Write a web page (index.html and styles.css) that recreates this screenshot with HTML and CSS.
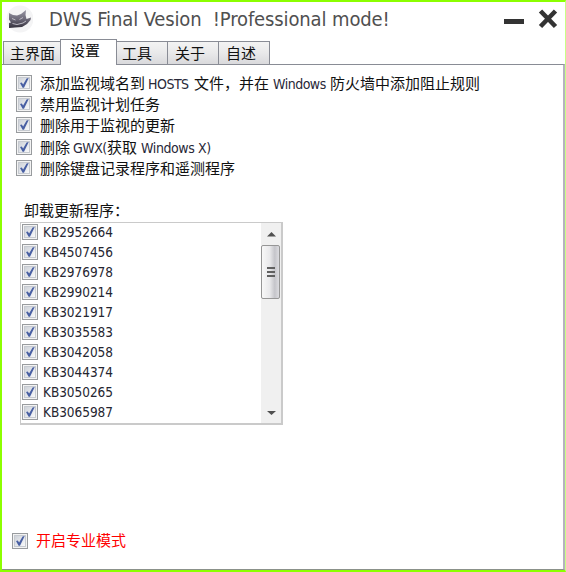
FILE: index.html
```html
<!DOCTYPE html>
<html lang="zh-CN">
<head>
<meta charset="utf-8">
<title>DWS Final Vesion</title>
<link rel="stylesheet" href="styles.css">
</head>
<body>
<svg width="0" height="0" class="defs" aria-hidden="true">
  <defs>
    <linearGradient id="box" x1="0" y1="0" x2="1" y2="1"><stop offset="0" stop-color="#ccd0d7"/><stop offset="1" stop-color="#fafbfc"/></linearGradient>
    <linearGradient id="cat" x1="0" y1="0" x2="0" y2="1"><stop offset="0" stop-color="#9795a3"/><stop offset=".5" stop-color="#6d6a79"/><stop offset="1" stop-color="#34313d"/></linearGradient>
  </defs>
  <symbol id="check" viewBox="0 0 16 16">
    <rect x=".5" y=".5" width="15" height="15" fill="#f3f3f3" stroke="#989b9e"/>
    <rect x="2.5" y="2.5" width="11" height="11" fill="url(#box)" stroke="#c6cad0"/>
    <path d="M4 8.1 5.8 7.4 7.1 9.4 10.6 3.6 12.7 3.1 8 12.7H6.6Z" fill="#485fa3"/>
  </symbol>
</svg>
<div class="window">
  <header class="titlebar">
    <svg class="logo" viewBox="0 0 30 30"><circle cx="17" cy="16" r="13.5" fill="#f4f4f5"/><path d="M6 10 10 12 14 12.5 18 11 23 7 22.5 12 23.5 16 28 14.5 27.5 17 24 21 19 24 12 24.5 6 25 6 20 8 19.5 6 16.5Z" fill="url(#cat)"/><path d="M9 15.5 12.5 17M16.5 16.5 20 14.5M9.5 20.5 14 21.5 20 20 23 18" stroke="#bdbbc5" stroke-width="1" fill="none"/></svg>
    <h1>DWS Final Vesion&nbsp; !Professional mode!</h1>
    <svg class="controls" viewBox="0 0 60 30"><path d="M5 19.5H25" stroke="#333" stroke-width="5"/><path d="M41.5 9 56.5 24.5M56.5 9 41.5 24.5" stroke="#333" stroke-width="4.6"/></svg>
  </header>
  <nav class="tabs">
    <span class="tab first">主界面</span><span class="tab active">设置</span><span class="tab third">工具</span><span class="tab">关于</span><span class="tab">自述</span>
  </nav>
  <main class="panel">
    <div class="options">
      <label><svg><use href="#check"/></svg><span>添加监视域名到<i class="hosts">HOSTS</i>文件，并在<i class="win">Windows</i>防火墙中添加阻止规则</span></label>
      <label><svg><use href="#check"/></svg><span>禁用监视计划任务</span></label>
      <label><svg><use href="#check"/></svg><span>删除用于监视的更新</span></label>
      <label><svg><use href="#check"/></svg><span>删除<i class="gwx">GWX(</i>获取<i class="winx">Windows X)</i></span></label>
      <label><svg><use href="#check"/></svg><span>删除键盘记录程序和遥测程序</span></label>
    </div>
    <h2>卸载更新程序：</h2>
    <div class="listbox">
      <div class="items">
        <label><svg><use href="#check"/></svg><span>KB2952664</span></label>
        <label><svg><use href="#check"/></svg><span>KB4507456</span></label>
        <label><svg><use href="#check"/></svg><span>KB2976978</span></label>
        <label><svg><use href="#check"/></svg><span>KB2990214</span></label>
        <label><svg><use href="#check"/></svg><span>KB3021917</span></label>
        <label><svg><use href="#check"/></svg><span>KB3035583</span></label>
        <label><svg><use href="#check"/></svg><span>KB3042058</span></label>
        <label><svg><use href="#check"/></svg><span>KB3044374</span></label>
        <label><svg><use href="#check"/></svg><span>KB3050265</span></label>
        <label><svg><use href="#check"/></svg><span>KB3065987</span></label>
      </div>
      <div class="scrollbar">
        <svg class="arrow" viewBox="0 0 20 22"><path d="M6 13.5 10.5 9 15 13.5Z" fill="#505050"/></svg>
        <div class="thumb"><b></b><b></b><b></b></div>
        <svg class="arrow down" viewBox="0 0 20 22"><path d="M6 10H15L10.5 14Z" fill="#505050"/></svg>
      </div>
    </div>
    <label class="pro"><svg><use href="#check"/></svg><span>开启专业模式</span></label>
  </main>
</div>
</body>
</html>
```
FILE: styles.css
```css
* { box-sizing: border-box; }
body { margin: 0; background: #fff; color: #111; font: 15px/20px "DejaVu Sans Condensed", "Noto Sans CJK SC", sans-serif; }
.defs { position: absolute; }
.window { width: 566px; height: 572px; border: 2px solid #8cff00; border-right: 1px solid #c8ff85; display: flex; flex-direction: column; overflow: hidden; }
.titlebar { height: 37px; flex: none; display: flex; }
.logo { width: 30px; height: 30px; margin: 1px 0 0 1px; }
h1 { margin: 2px 0 0 16px; font: 20px/30px "DejaVu Sans Condensed", sans-serif; letter-spacing: -0.12px; color: #505050; width: 360px; white-space: pre; }
.controls { width: 60px; height: 30px; margin-left: 90px; flex: none; }
.tabs { height: 25px; flex: none; display: flex; align-items: flex-end; padding-left: 1px; }
.tab { width: 52px; height: 23px; padding: 2px 0 0 7px; border: 1px solid #898c95; border-bottom: 0; margin-right: -1px; background: linear-gradient(#f3f3f3, #e9e9ea 50%, #d9d9dc); white-space: nowrap; }
.tab.first { width: 58px; padding-left: 6px; }
.tab.third { padding-left: 5px; }
.tab.active { width: 57px; height: 26px; padding: 1px 0 0 9px; margin-bottom: -1px; background: #fff; z-index: 1; }
.panel { flex: 1; border: 1px solid #898c95; border-left: 0; border-right: 2px solid #b5b3bf; border-bottom-color: #8b918a; display: flex; flex-direction: column; align-items: flex-start; }
label { display: flex; align-items: center; white-space: nowrap; }
label svg { width: 16px; height: 16px; flex: none; margin-right: 8px; }
i { font-style: normal; font-size: 14px; display: inline-block; color: #282838; white-space: pre; }
.hosts { width: 49px; padding-left: 3px; letter-spacing: -0.5px; }
.win { width: 61px; padding-left: 4px; letter-spacing: -0.5px; }
.gwx { width: 37px; padding-left: 3px; letter-spacing: -0.5px; }
.winx { padding-left: 4px; letter-spacing: -0.4px; }
.options { margin: 7px 0 0 14px; display: grid; grid-auto-rows: 21.4px; }
.options span { position: relative; top: 1px; }
h2 { font: inherit; margin: 22px 0 0 22px; height: 21px; }
.listbox { margin-left: 18px; width: 263px; height: 203px; border: 2px solid #cacaca; border-top-width: 1px; border-left-width: 1px; display: flex; }
.items { flex: 1; padding-left: 1px; margin-top: -1px; }
.items label { height: 20px; font-size: 13.5px; letter-spacing: -0.05px; color: #252530; }
.items svg { margin-right: 5px; }
.scrollbar { width: 20px; background: #f0f0f0; display: flex; flex-direction: column; }
.arrow { width: 20px; height: 22px; }
.down { margin-top: auto; }
.thumb { width: 19px; height: 54px; border: 1px solid #969696; border-radius: 2px; background: linear-gradient(90deg, #f8f8f8, #e9e9eb 45%, #c5c5ca 75%, #dcdce0); display: flex; flex-direction: column; align-items: center; justify-content: center; gap: 2px; }
.thumb b { width: 8px; height: 2px; background: #606060; }
.pro { margin: auto 0 18px 10px; color: #f00; }
```
